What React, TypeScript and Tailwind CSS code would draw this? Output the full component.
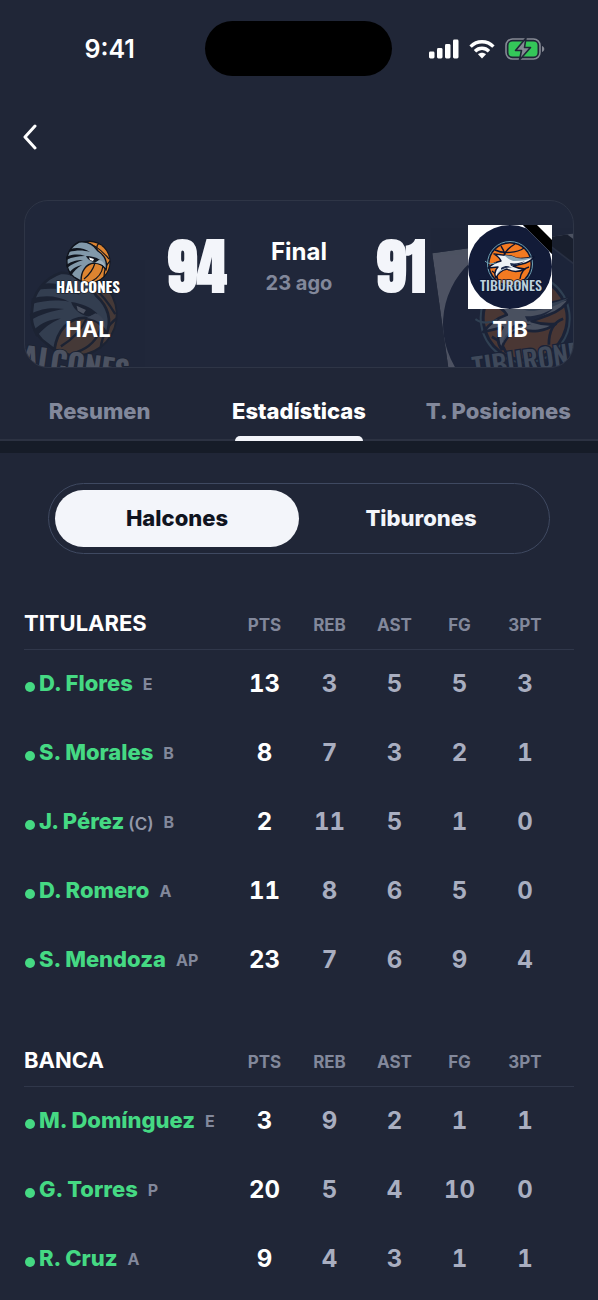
import { useState } from "react";
import clsx from "clsx";

type Player = {
    name: string;
    position: string;
    captain?: boolean;
    stats: number[];
};

const COLUMNS = ["PTS", "REB", "AST", "FG", "3PT"];

const STARTERS: Player[] = [
    { name: "D. Flores", position: "E", stats: [13, 3, 5, 5, 3] },
    { name: "S. Morales", position: "B", stats: [8, 7, 3, 2, 1] },
    { name: "J. Pérez", position: "B", captain: true, stats: [2, 11, 5, 1, 0] },
    { name: "D. Romero", position: "A", stats: [11, 8, 6, 5, 0] },
    { name: "S. Mendoza", position: "AP", stats: [23, 7, 6, 9, 4] },
];

const BENCH: Player[] = [
    { name: "M. Domínguez", position: "E", stats: [3, 9, 2, 1, 1] },
    { name: "G. Torres", position: "P", stats: [20, 5, 4, 10, 0] },
    { name: "R. Cruz", position: "A", stats: [9, 4, 3, 1, 1] },
];

const HalconesLogo = ({ className }: { className?: string }) => (
    <svg viewBox="0 0 84 84" className={className} aria-hidden="true">
        <circle cx="43" cy="37" r="21.5" fill="#10141d" />
        <circle cx="43.500" cy="37" r="20" fill="#dd8430" />
        <g fill="none" stroke="#10141d" strokeWidth="1.2">
            <path d="M37 17c8 1 17 6 26 17" />
            <path d="M53 18c-3 3-3 6-1 10" />
            <path d="M64 36c-4 4-6 10-6 16" />
            <path d="M38 54c5-4 9-9 11-16" />
            <path d="M46 56c6-3 10-8 11-15" />
        </g>
        <path
            d="M33 17c8-1 15 3 19 9 6 4 10 10 8 19-3-6-7-7-12-7-8 1-13 8-13 18l-7-4c-5-4-7-8-7-14-1-9 4-17 12-21z"
            fill="#8299aa"
            stroke="#10141d"
            strokeWidth="1.4"
            strokeLinejoin="round"
        />
        <g fill="#10141d">
            <path d="M24 24c7-2 14-1 20 3-7-2-13-2-21 0z" />
            <path d="M20 32c7-3 13-3 19-1-7 0-12 1-19 4z" />
            <path d="M20 40c6-4 11-5 17-5-6 2-11 4-16 8z" />
            <path d="M23 48c4-5 8-7 13-8-5 3-8 6-11 11z" />
            <path d="M40 31c5 0 10 1 14 4l-4 2c-4 0-8-2-10-6z" />
        </g>
        <path d="M43 32.500l5 1.500-1 2-3-1z" fill="#fff" />
        <path d="M53 35c4 1 6 4 6 7-3-3-6-4-10-4z" fill="#a3b4c0" />
        <text
            x="42"
            y="68"
            textAnchor="middle"
            fontSize="15"
            fontWeight="700"
            fill="#fff"
            stroke="#10141d"
            strokeWidth="1"
            paintOrder="stroke"
            className="font-['Oswald','Roboto_Condensed',sans-serif]"
        >
            HALCONES
        </text>
    </svg>
);

const TiburonesLogo = ({ className }: { className?: string }) => (
    <svg viewBox="0 0 84 84" className={className} aria-hidden="true">
        <path d="M0 0h84v84H0z" fill="#fff" />
        <circle cx="42" cy="42" r="42" fill="#121b38" />
        <path d="M55 0h14l15 15v14z" fill="#000" />
        <path d="M55 0l29 29" stroke="#4a5265" strokeWidth="0.8" />
        <circle cx="42" cy="39" r="22.500" fill="#0b1430" stroke="#6fa3b5" strokeWidth="1" />
        <circle cx="42" cy="39" r="20.500" fill="#f37a21" />
        <g fill="none" stroke="#0b1430" strokeWidth="1.4">
            <path d="M27 25c8 4 22 3 29-2" />
            <path d="M47 19c-7 4-11 9-12 15" />
            <path d="M33 21c3 4 4 8 4 12" />
            <path d="M61 42c-5 1-8 5-9 12" />
            <path d="M24 46c3 2 5 5 6 9" />
        </g>
        <path
            d="M26 29l17 2 5 2c6 1 12 0 18-1-3 4-7 6-12 7l-9 2c4 2 8 3 12 3-6 3-13 3-18 0-5 1-9 4-11 9-2-4-1-8 2-11l-10 1c4-4 8-6 13-7-1-3-4-5-7-7z"
            fill="#eef3f6"
            stroke="#0b1430"
            strokeWidth="1.4"
            strokeLinejoin="round"
        />
        <path d="M36 30l8 1 5 2c6 1 11 0 16-1-5 3-11 4-18 4-4 0-8-3-11-6z" fill="#8ba5b4" />
        <path d="M42 38c5 1 10 0 15-2-4 3-9 4-14 5z" fill="#1d2c4c" />
        <path d="M33 43c5-3 8-2 12 0-5-1-8 0-12 2z" fill="#1d2c4c" />
        <path d="M29 50c1-4 4-6 8-6-3 1-6 3-8 6z" fill="#a8bcc8" />
        <path d="M17 36c3 3 7 3 11 2" fill="none" stroke="#6fa3b5" strokeWidth="1" />
        <text
            x="43"
            y="66"
            textAnchor="middle"
            fontSize="14"
            fontWeight="500"
            fill="#bdd0dc"
            stroke="#0b1430"
            strokeWidth="1.4"
            paintOrder="stroke"
            className="font-['Oswald','Roboto_Condensed',sans-serif]"
        >
            TIBURONES
        </text>
    </svg>
);

const StatusBar = () => (
    <div className="grid grid-cols-3 items-center pt-[21px]">
        <span className="pl-5 text-center text-[25px] leading-8 font-semibold text-white">9:41</span>
        <span className="mx-auto h-[55px] w-[187px] rounded-full bg-black" />
        <span className="flex items-center justify-center gap-[10px] pr-[22px]">
            <svg viewBox="0 0 30 20" className="h-5 w-[30px]" fill="#fff" aria-hidden="true">
                <rect x="0" y="12.5" width="5.500" height="7" rx="1.4" />
                <rect x="8" y="9" width="5.500" height="10.5" rx="1.4" />
                <rect x="16" y="5" width="5.500" height="14.5" rx="1.4" />
                <rect x="24" y="0.5" width="5.500" height="19" rx="1.4" />
            </svg>
            <svg viewBox="0 0 26 20" className="h-5 w-[26px]" aria-hidden="true">
                <g fill="none" stroke="#fff" strokeWidth="3.4">
                    <path d="M1.6 7.6c6.4-6.4 16.400-6.400 22.800 0" />
                    <path d="M6 12.200c4-4 10-4 14 0" />
                </g>
                <path d="M13 19.500l-4-4.200c2.400-2 5.600-2 8 0z" fill="#fff" />
            </svg>
            <svg viewBox="0 0 40 24" className="h-6 w-10" aria-hidden="true">
                <rect x="1" y="2" width="34" height="20" rx="6.500" fill="none" stroke="#858994" strokeWidth="1.600" />
                <rect x="3.500" y="4.500" width="29" height="15" rx="4" fill="#34c759" />
                <path d="M37 9c3 1 3 5 0 6z" fill="#858994" />
                <path
                    d="M21 1L10.500 13.500h6L14.500 23 25.500 10.500h-6z"
                    fill="#858994"
                    stroke="#202637"
                    strokeWidth="1.600"
                    strokeLinejoin="round"
                />
            </svg>
        </span>
    </div>
);

const ScoreCard = () => (
    <section className="relative mx-6 overflow-hidden rounded-3xl border border-[#2e3546] bg-[#20273a]">
        <HalconesLogo className="absolute top-10 -left-9 size-[166px] rotate-8 opacity-20" />
        <TiburonesLogo className="absolute top-10 -right-9 size-[166px] -rotate-8 opacity-20" />
        <div className="relative flex py-6">
            <div className="flex w-[126px] flex-col items-center">
                <HalconesLogo className="size-[84px]" />
                <span className="mt-1.5 text-[22px] leading-7 font-bold text-white">HAL</span>
            </div>
            <div className="flex h-[84px] flex-1 items-center justify-between px-3">
                <Score value={94} />
                <div className="text-center font-bold">
                    <p className="text-2xl leading-8 text-white">Final</p>
                    <p className="text-xl leading-[30px] text-[#82889b]">23 ago</p>
                </div>
                <Score value={91} />
            </div>
            <div className="flex w-[126px] flex-col items-center">
                <TiburonesLogo className="size-[84px]" />
                <span className="mt-1.5 text-[22px] leading-7 font-bold text-white">TIB</span>
            </div>
        </div>
    </section>
);

const Score = ({ value }: { value: number }) => (
    <span className="w-[68px] text-center font-['Anton','Impact',sans-serif] text-[60px] leading-[84px] font-bold text-[#f3f5fa]">
        {value}
    </span>
);

const Tabs = () => {
    const [active, setActive] = useState("Estadísticas");
    return (
        <nav className="mt-3 grid grid-cols-3 border-b-2 border-[#2c3242]" role="tablist">
            {["Resumen", "Estadísticas", "T. Posiciones"].map((tab) => (
                <button
                    key={tab}
                    role="tab"
                    aria-selected={tab === active}
                    onClick={() => setActive(tab)}
                    className={clsx(
                        "relative h-[59px] pt-1 text-[22px] font-extrabold whitespace-nowrap",
                        tab === active ? "text-white" : "text-[#82889b]"
                    )}
                >
                    {tab}
                    {tab === active && (
                        <span className="absolute inset-x-9 -bottom-0.5 h-[5px] rounded-t-md bg-[#f3f5fa]" />
                    )}
                </button>
            ))}
        </nav>
    );
};

const StatsTable = ({ title, players }: { title: string; players: Player[] }) => (
    <table className="w-full table-fixed">
        <thead>
            <tr className="h-[50px] border-b border-[#30374a]">
                <th scope="col" className="text-left text-[22px] font-bold text-white">
                    {title}
                </th>
                {COLUMNS.map((col) => (
                    <th
                        key={col}
                        scope="col"
                        className="w-[65px] pt-1 text-center text-[17px] font-bold text-[#82889b] last:w-[82px] last:pr-4"
                    >
                        {col}
                    </th>
                ))}
            </tr>
        </thead>
        <tbody>
            {players.map((player) => (
                <tr key={player.name} className="h-[69px]">
                    <th scope="row" className="text-left font-bold whitespace-nowrap">
                        <span className="flex items-center">
                            <span className="mt-1.5 mr-1 ml-px size-[10px] rounded-full bg-[#45d983]" />
                            <a href="#" className="text-[22px] font-extrabold text-[#45d983]">
                                {player.name}
                            </a>
                            {player.captain && (
                                <span className="mt-1 ml-1 text-[17px] leading-6 font-semibold text-[#9297a8]">(C)</span>
                            )}
                            <span className="ml-2.5 text-base text-[#82889b]">{player.position}</span>
                        </span>
                    </th>
                    {player.stats.map((value, i) => (
                        <td
                            key={COLUMNS[i]}
                            className={clsx(
                                "text-center text-2xl font-bold tabular-nums last:pr-4",
                                i === 0 ? "text-white" : "text-[#a9aec0]"
                            )}
                        >
                            {value}
                        </td>
                    ))}
                </tr>
            ))}
        </tbody>
    </table>
);

export default function App() {
    const [team, setTeam] = useState("Halcones");
    return (
        <div className="min-h-screen bg-[#202637] font-['Inter',sans-serif]">
            <StatusBar />
            <header className="px-3.5 pt-[39px] pb-[41px]">
                <button aria-label="Volver" className="flex h-11 w-8 items-center justify-center">
                    <svg viewBox="0 0 16 26" className="h-[26px] w-4" aria-hidden="true">
                        <path
                            d="M13 2L3 13l10 11"
                            fill="none"
                            stroke="#fff"
                            strokeWidth="3"
                            strokeLinecap="round"
                            strokeLinejoin="round"
                        />
                    </svg>
                </button>
            </header>
            <ScoreCard />
            <Tabs />
            <div className="h-3 bg-[#161c28]" />
            <div className="mx-12 mt-[30px] grid h-[71px] grid-cols-2 rounded-full border border-[#3f4961] p-1.5">
                {["Halcones", "Tiburones"].map((name) => (
                    <button
                        key={name}
                        aria-pressed={team === name}
                        onClick={() => setTeam(name)}
                        className={clsx(
                            "rounded-full text-[22px] font-extrabold",
                            team === name ? "bg-[#f3f5fa] text-[#10141f]" : "text-[#f3f5fa]"
                        )}
                    >
                        {name}
                    </button>
                ))}
            </div>
            <main className="mt-[45px] flex flex-col gap-[42px] px-6">
                <StatsTable title="TITULARES" players={STARTERS} />
                <StatsTable title="BANCA" players={BENCH} />
            </main>
        </div>
    );
}
